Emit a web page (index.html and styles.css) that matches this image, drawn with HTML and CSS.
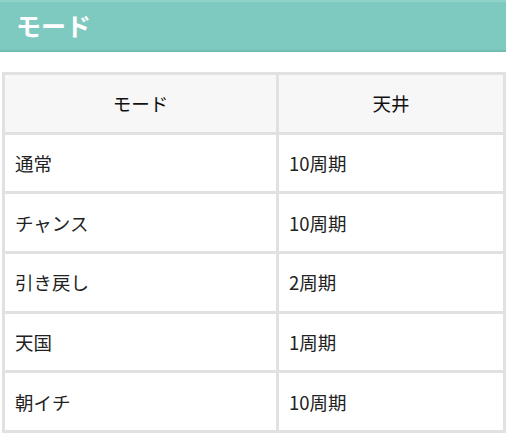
FILE: index.html
```html
<!DOCTYPE html>
<html lang="ja">
<head>
<meta charset="utf-8">
<link rel="stylesheet" href="styles.css">
</head>
<body>
<h2 class="title">モード</h2>
<table class="modes">
  <thead>
    <tr><th class="col-mode">モード</th><th>天井</th></tr>
  </thead>
  <tbody>
    <tr><td>通常</td><td>10周期</td></tr>
    <tr><td>チャンス</td><td>10周期</td></tr>
    <tr><td>引き戻し</td><td>2周期</td></tr>
    <tr><td>天国</td><td>1周期</td></tr>
    <tr><td>朝イチ</td><td>10周期</td></tr>
  </tbody>
</table>
</body>
</html>
```
FILE: styles.css
```css
html, body {
  margin: 0;
  padding: 0;
  background: #ffffff;
}
body {
  font-family: "Noto Sans CJK JP", "Noto Sans", sans-serif;
  color: #222;
}
.title {
  margin: 0;
  width: 506px;
  height: 52px;
  box-sizing: border-box;
  background: #7fcac0;
  border-top: 2px solid #8fd2c8;
  border-bottom: 2px solid #72bdb3;
  color: #ffffff;
  font-size: 25px;
  font-weight: bold;
  line-height: 46px;
  padding-left: 16px;
}
.modes {
  margin: 20px 0 0 2px;
  width: 504px;
  border-collapse: collapse;
  font-size: 18.5px;
}
.modes th, .modes td {
  border: 3px solid #e1e1e1;
  height: 59.7px;
  box-sizing: border-box;
  padding: 0 10px;
  text-align: left;
  font-weight: normal;
}
.modes th {
  background: #f7f7f7;
  text-align: center;
  color: #111;
}
.modes .col-mode {
  width: 274px;
}
```
